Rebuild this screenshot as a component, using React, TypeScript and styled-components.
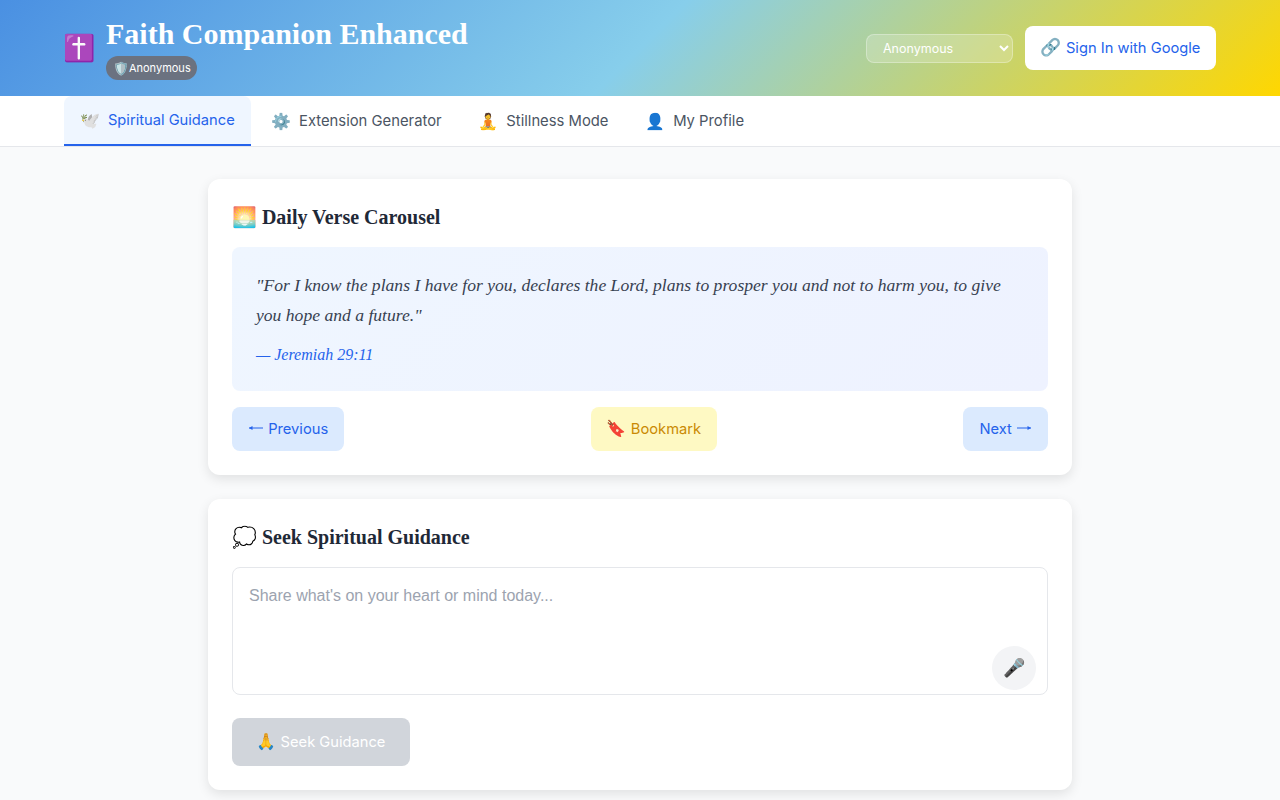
import styled, { createGlobalStyle } from 'styled-components';

const GlobalStyle = createGlobalStyle`
  * {
    box-sizing: border-box;
  }
  html, body {
    margin: 0;
    padding: 0;
    height: 800px;
    overflow: hidden;
    background: #f9fafb;
    font-family: Inter, 'Noto Color Emoji', sans-serif;
  }
`;

const Header = styled.header`
  height: 96px;
  padding: 0 64px;
  display: flex;
  align-items: center;
  justify-content: space-between;
  background: linear-gradient(135deg, #4a90e2 0%, #87ceeb 50%, #ffd700 100%);
`;

const Brand = styled.div`
  display: flex;
  align-items: center;
  gap: 12px;
`;

const BrandIcon = styled.span`
  font-size: 26px;
  line-height: 34px;
  width: 30px;
  margin-left: -1px;
  margin-right: 1px;
`;

const BrandText = styled.div`
  display: flex;
  flex-direction: column;
  align-items: flex-start;
  gap: 4px;
`;

const Title = styled.h1`
  margin: 0;
  font-family: 'Liberation Serif', serif;
  font-size: 30px;
  line-height: 36px;
  font-weight: 700;
  color: #fff;
`;

const Badge = styled.span`
  display: inline-flex;
  align-items: center;
  width: 91px;
  height: 24px;
  padding: 0 7px;
  border-radius: 12px;
  background: #6b7280;
  color: #fff;
  font-size: 11px;
  white-space: nowrap;
`;

const Emoji = styled.span<{ $size?: number }>`
  font-size: ${(p) => p.$size ?? 16}px;
`;

const HeaderActions = styled.div`
  display: flex;
  align-items: center;
  gap: 12px;
`;

const RoleSelect = styled.select`
  width: 147px;
  height: 29px;
  padding: 0 12px;
  border: 1px solid rgba(255, 255, 255, 0.3);
  border-radius: 8px;
  background: rgba(255, 255, 255, 0.2);
  color: #fff;
  font-family: Inter, sans-serif;
  font-size: 12.5px;
`;

const SignIn = styled.button`
  height: 44px;
  width: 191px;
  padding: 0 0 2px;
  border: 0;
  border-radius: 8px;
  background: #fff;
  color: #2563eb;
  font-family: Inter, 'Noto Color Emoji', sans-serif;
  font-size: 14.7px;
`;

const Nav = styled.nav`
  height: 51px;
  padding: 0 64px;
  display: flex;
  background: #fff;
  border-bottom: 1px solid #e5e7eb;
`;

const Tab = styled.div<{ $active?: boolean }>`
  height: 50px;
  padding: 0 ${(p) => (p.$active ? '16px' : '18.4px')};
  margin-right: ${(p) => (p.$active ? '2px' : '0')};
  display: flex;
  align-items: center;
  gap: 8px;
  font-size: ${(p) => (p.$active ? '14.7px' : '14.8px')};
  border-radius: 8px 8px 0 0;
  color: ${(p) => (p.$active ? '#2563eb' : '#4b5563')};
  background: ${(p) => (p.$active ? '#eff6ff' : 'transparent')};
  border-bottom: ${(p) => (p.$active ? '2px solid #2563eb' : '0')};
`;

const Main = styled.main`
  width: 864px;
  margin: 0 auto;
  padding-top: 32px;
  display: flex;
  flex-direction: column;
  gap: 24px;
`;

const Card = styled.section`
  padding: 24px;
  border-radius: 12px;
  background: #fff;
  box-shadow: 0 4px 12px rgba(0, 0, 0, 0.1);
`;

const CardTitle = styled.h2`
  margin: 0 0 16px;
  font-family: 'Liberation Serif', 'Noto Color Emoji', serif;
  font-size: 20px;
  line-height: 28px;
  font-weight: 700;
  color: #1f2937;
`;

const VerseBox = styled.div`
  padding: 23px 24px 24px;
  margin-bottom: 16px;
  height: 144px;
  border-radius: 8px;
  background: linear-gradient(135deg, #eff6ff, #eef2ff);
  font-family: 'Liberation Serif', serif;
  font-style: italic;
`;

const VerseText = styled.p`
  margin: 0 0 13px;
  font-size: 17.6px;
  line-height: 30px;
  color: #374151;
`;

const VerseRef = styled.p`
  margin: 0;
  font-size: 16px;
  line-height: 24px;
  color: #2563eb;
`;

const VerseActions = styled.div`
  display: flex;
  justify-content: space-between;
`;

const SoftButton = styled.button<{ $tone?: 'blue' | 'yellow' }>`
  width: ${(p) => (p.$tone === 'yellow' ? '126px' : 'auto')};
  height: 44px;
  padding: 0 16px ${(p) => (p.$tone === 'yellow' ? '2px' : '0')};
  border: 0;
  border-radius: 8px;
  font-family: Inter, 'Noto Color Emoji', sans-serif;
  font-size: 14.7px;
  white-space: nowrap;
  background: ${(p) => (p.$tone === 'yellow' ? '#fef9c3' : '#dbeafe')};
  color: ${(p) => (p.$tone === 'yellow' ? '#ca8a04' : '#2563eb')};
`;

const ArrowIcon = styled.svg`
  width: 16px;
  height: 8px;
  vertical-align: 2px;
`;

const LeftArrow = () => (
  <ArrowIcon viewBox="0 0 16 8">
    <path d="M1 4H15" stroke="currentColor" fill="none" />
    <path d="M1 4L4.5 2V6Z" fill="currentColor" />
  </ArrowIcon>
);

const RightArrow = () => (
  <ArrowIcon viewBox="0 0 16 8">
    <path d="M1 4H15" stroke="currentColor" fill="none" />
    <path d="M15 4L11.5 2V6Z" fill="currentColor" />
  </ArrowIcon>
);

const InputWrap = styled.div`
  position: relative;
  height: 128px;
  margin-bottom: 23px;
`;

const Prompt = styled.textarea`
  display: block;
  width: 100%;
  height: 100%;
  padding: 16px;
  border: 1px solid #e5e7eb;
  border-radius: 8px;
  resize: none;
  outline: none;
  font-family: 'Liberation Sans', sans-serif;
  font-size: 16px;
  line-height: 24px;
  &::placeholder {
    color: #9ca3af;
  }
`;

const MicButton = styled.button`
  position: absolute;
  right: 12px;
  bottom: 5px;
  width: 44px;
  height: 44px;
  padding: 0;
  border: 0;
  border-radius: 50%;
  background: #f3f4f6;
  font-size: 18px;
`;

const SeekButton = styled.button`
  display: block;
  height: 48px;
  width: 178px;
  padding: 0 0 2px;
  border: 0;
  border-radius: 8px;
  background: #d1d5db;
  color: #fff;
  font-family: Inter, 'Noto Color Emoji', sans-serif;
  font-size: 14.7px;
`;

export default function App() {
  return (
    <>
      <GlobalStyle />
      <Header>
        <Brand>
          <BrandIcon>✝️</BrandIcon>
          <BrandText>
            <Title>Faith Companion Enhanced</Title>
            <Badge><Emoji $size={12.8}>🛡️</Emoji>Anonymous</Badge>
          </BrandText>
        </Brand>
        <HeaderActions>
          <RoleSelect defaultValue="Anonymous">
            <option>Anonymous</option>
          </RoleSelect>
          <SignIn><Emoji $size={17}>🔗</Emoji> Sign In with Google</SignIn>
        </HeaderActions>
      </Header>
      <Nav>
        <Tab $active><Emoji>🕊️</Emoji> <span>Spiritual Guidance</span></Tab>
        <Tab><Emoji>⚙️</Emoji> <span>Extension Generator</span></Tab>
        <Tab><Emoji>🧘</Emoji> <span>Stillness Mode</span></Tab>
        <Tab><Emoji>👤</Emoji> <span>My Profile</span></Tab>
      </Nav>
      <Main>
        <Card>
          <CardTitle>🌅 Daily Verse Carousel</CardTitle>
          <VerseBox>
            <VerseText>
              "For I know the plans I have for you, declares the Lord, plans to prosper you and not
              to harm you, to give you hope and a future."
            </VerseText>
            <VerseRef>— Jeremiah 29:11</VerseRef>
          </VerseBox>
          <VerseActions>
            <SoftButton><LeftArrow /> Previous</SoftButton>
            <SoftButton $tone="yellow"><Emoji>🔖</Emoji> Bookmark</SoftButton>
            <SoftButton>Next <RightArrow /></SoftButton>
          </VerseActions>
        </Card>
        <Card>
          <CardTitle>💭 Seek Spiritual Guidance</CardTitle>
          <InputWrap>
            <Prompt placeholder="Share what's on your heart or mind today..." />
            <MicButton>🎤</MicButton>
          </InputWrap>
          <SeekButton><Emoji>🙏</Emoji> Seek Guidance</SeekButton>
        </Card>
      </Main>
    </>
  );
}
